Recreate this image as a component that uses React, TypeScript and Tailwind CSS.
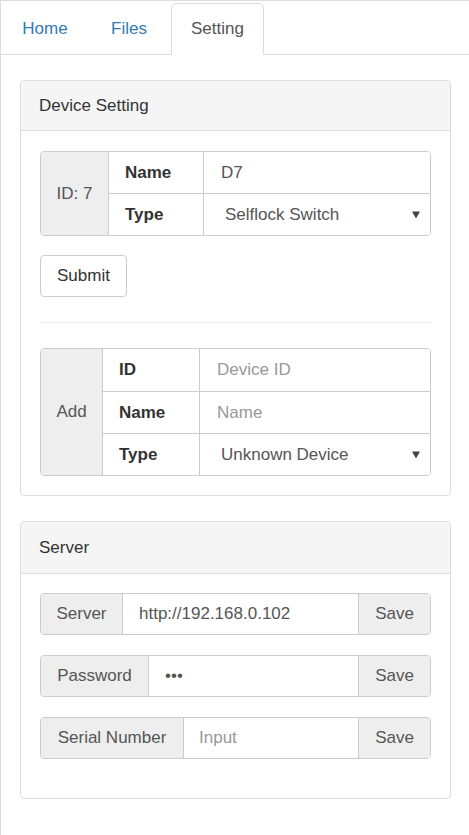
import React from "react";

const font = { fontFamily: '"Liberation Sans", Arial, sans-serif' };

const Caret = () => (
  <span className="pointer-events-none absolute right-[10px] top-1/2 -translate-y-1/2 w-0 h-0 border-l-[4px] border-r-[4px] border-t-[7px] border-l-transparent border-r-transparent border-t-[#444]" />
);

const Panel = ({
  title,
  headH,
  bodyClass,
  children,
}: {
  title: string;
  headH: string;
  bodyClass: string;
  children: React.ReactNode;
}) => (
  <div className="border border-[#ddd] rounded-[4px] bg-white">
    <div className={`${headH} flex items-center px-[18px] bg-[#f5f5f5] border-b border-[#ddd] rounded-t-[4px] text-[#333]`}>
      {title}
    </div>
    <div className={bodyClass}>{children}</div>
  </div>
);

const SaveRow = ({ label, addonW, children }: { label: string; addonW: string; children: React.ReactNode }) => (
  <div className="flex h-[42px] border border-[#ccc] rounded-[4px] overflow-hidden text-[#555]">
    <div className={`${addonW} shrink-0 flex items-center justify-center bg-[#eee] border-r border-[#ccc]`}>{label}</div>
    {children}
    <button className="w-[72px] shrink-0 bg-[#eee] border-l border-[#ccc] text-[#555]">Save</button>
  </div>
);

export default function App() {
  return (
    <div style={font} className="min-h-screen bg-white border-l border-t border-[#ddd] text-[17px] leading-[24px]">
      {/* Tabs */}
      <nav className="flex border-b border-[#ddd] pt-[2px] pl-[2px] gap-[5px]">
        <a className="w-[84px] h-[52px] -mb-px pt-[13px] text-center text-[#337ab7] border border-transparent">Home</a>
        <a className="w-[74px] h-[52px] -mb-px pt-[13px] text-center text-[#337ab7] border border-transparent">Files</a>
        <a className="w-[93px] h-[52px] -mb-px pt-[13px] text-center text-[#555] bg-white border border-[#ddd] border-b-transparent rounded-t-[5px]">
          Setting
        </a>
      </nav>

      <div className="pl-[19px] pr-[18px] pt-[25px] pb-[36px] flex flex-col gap-[25px]">
        <Panel title="Device Setting" headH="h-[50px]" bodyClass="px-[19px] pt-[20px] pb-[19px]">
          {/* Existing device */}
          <div className="grid grid-cols-[68px_95px_1fr] grid-rows-[41px_42px] border border-[#ccc] rounded-[4px] overflow-hidden text-[#555]">
            <div className="row-span-2 flex items-center justify-center bg-[#eee] border-r border-[#ccc]">ID: 7</div>
            <div className="flex items-center pl-[16px] font-bold text-[#333] border-r border-[#ccc]">Name</div>
            <input defaultValue="D7" className="pl-[17px] outline-none bg-white text-[#555] min-w-0" />
            <div className="flex items-center pl-[16px] font-bold text-[#333] border-r border-t border-[#ccc]">Type</div>
            <div className="relative border-t border-[#ccc]">
              <select className="appearance-none w-full h-full pl-[21px] bg-white text-[#555] outline-none">
                <option>Selflock Switch</option>
              </select>
              <Caret />
            </div>
          </div>

          <button className="mt-[19px] w-[87px] h-[42px] border border-[#ccc] rounded-[4px] bg-white text-[#333]">Submit</button>

          <div className="mt-[25px] border-t border-[#eee]" />

          {/* Add device */}
          <div className="mt-[25px] grid grid-cols-[62px_97px_1fr] grid-rows-[42px_42px_42px] border border-[#ccc] rounded-[4px] overflow-hidden text-[#555]">
            <div className="row-span-3 flex items-center justify-center bg-[#eee] border-r border-[#ccc]">Add</div>
            <div className="flex items-center pl-[16px] font-bold text-[#333] border-r border-[#ccc]">ID</div>
            <input placeholder="Device ID" className="pl-[17px] outline-none bg-white text-[#555] placeholder:text-[#999] min-w-0" />
            <div className="flex items-center pl-[16px] font-bold text-[#333] border-r border-t border-[#ccc]">Name</div>
            <input placeholder="Name" className="pl-[17px] outline-none bg-white text-[#555] placeholder:text-[#999] border-t border-[#ccc] min-w-0" />
            <div className="flex items-center pl-[16px] font-bold text-[#333] border-r border-t border-[#ccc]">Type</div>
            <div className="relative border-t border-[#ccc]">
              <select className="appearance-none w-full h-full pl-[21px] bg-white text-[#555] outline-none">
                <option>Unknown Device</option>
              </select>
              <Caret />
            </div>
          </div>
        </Panel>

        <Panel title="Server" headH="h-[52px]" bodyClass="px-[19px] pt-[19px] pb-[39px] flex flex-col gap-[20px]">
          <SaveRow label="Server" addonW="w-[82px]">
            <input defaultValue="http://192.168.0.102" className="flex-1 min-w-0 pl-[16px] outline-none bg-white text-[#555]" />
          </SaveRow>
          <SaveRow label="Password" addonW="w-[108px]">
            <input type="password" defaultValue="123" className="flex-1 min-w-0 pl-[16px] outline-none bg-white text-[#555]" />
          </SaveRow>
          <SaveRow label="Serial Number" addonW="w-[143px]">
            <input placeholder="Input" className="flex-1 min-w-0 pl-[15px] outline-none bg-white text-[#555] placeholder:text-[#999]" />
          </SaveRow>
        </Panel>
      </div>
    </div>
  );
}
